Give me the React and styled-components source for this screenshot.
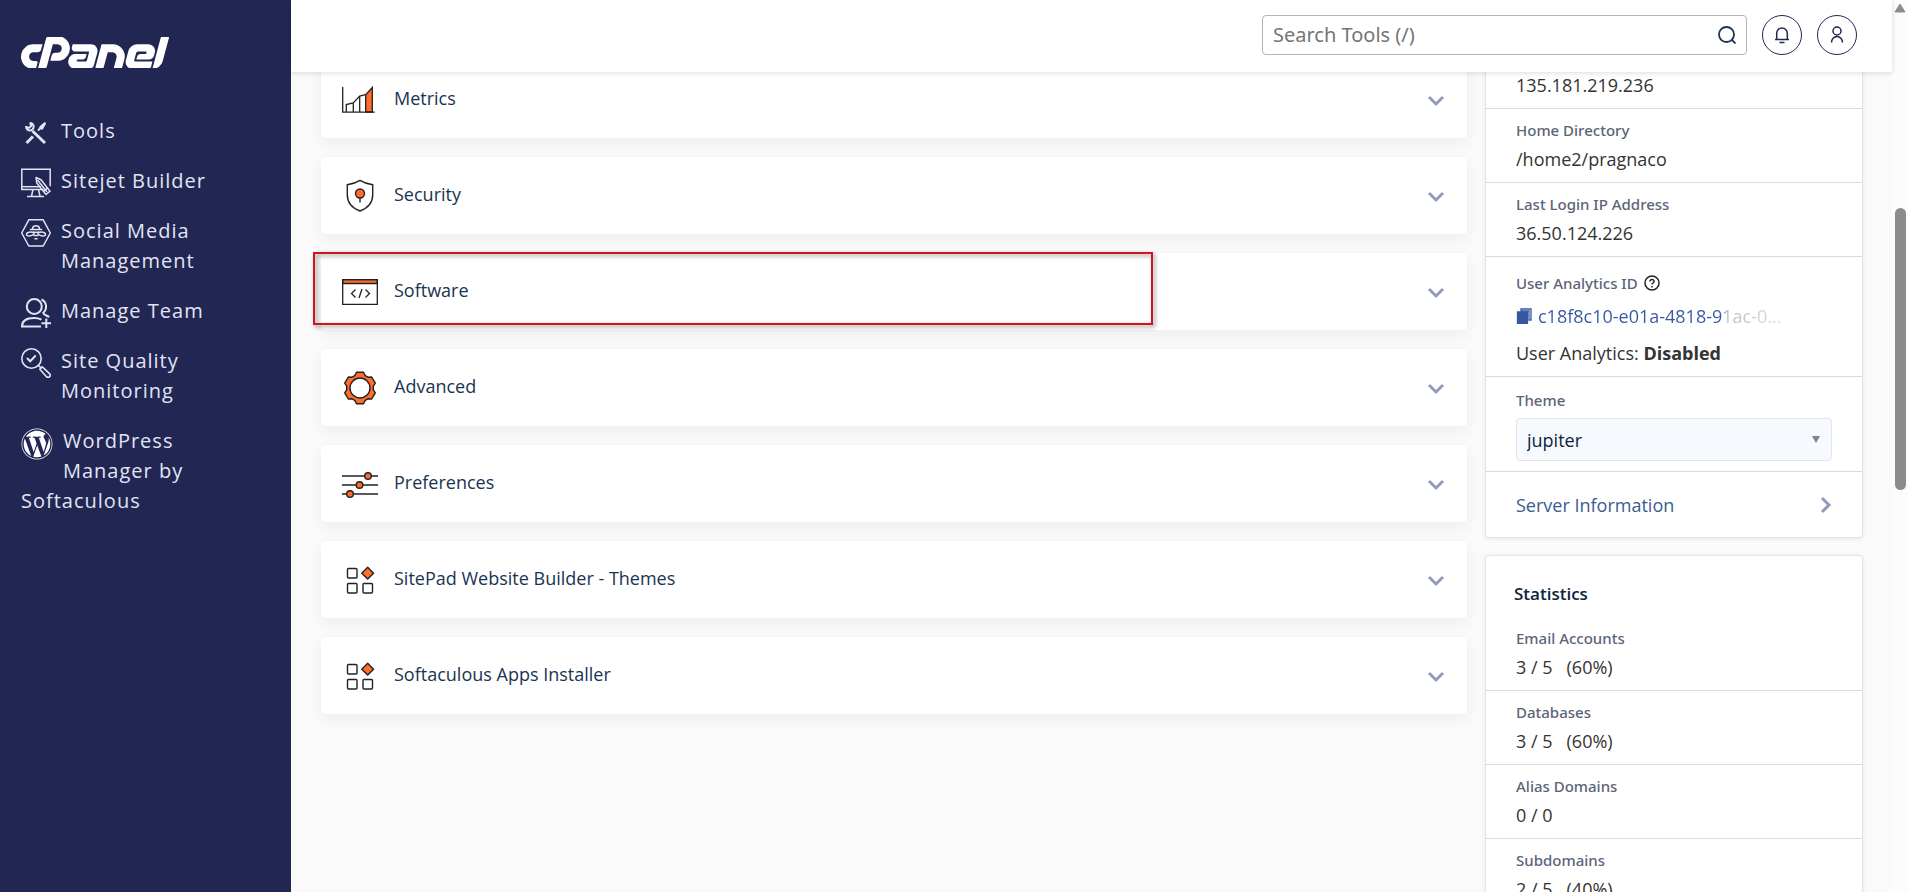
import React from "react";
import styled, { createGlobalStyle } from "styled-components";
import { SiCpanel } from "react-icons/si";
import { FaWordpress } from "react-icons/fa";

const GlobalStyle = createGlobalStyle`
  * { box-sizing: border-box; }
  body {
    margin: 0;
    background: #fafafa;
    color: #333;
    font-family: "Open Sans", "Noto Sans", sans-serif;
    font-size: 18px;
  }
  button, input, select { font: inherit; }
  a { text-decoration: none; }
`;

const Page = styled.div`
  display: flex;
  height: 100vh;
  overflow: hidden;
`;

const Sidebar = styled.nav`
  flex: 0 0 291px;
  background: #212653;
  padding: 37px 30px 0 21px;
`;

const Logo = styled.a`
  display: block;
  height: 31px;
  margin-bottom: 38px;
  color: #fff;
  svg { display: block; width: 148px; height: 31px; }
`;

const NavList = styled.ul`
  list-style: none;
  margin: 0;
  padding: 0;
`;

const NavLink = styled.a`
  display: block;
  padding: 10px 0;
  color: #e2e4f3;
  font-size: 20px;
  line-height: 30px;
  letter-spacing: 1px;
`;

const NavIcon = styled.span`
  float: left;
  height: 32px;
  margin: 2px 10px 0 0;
  svg { display: block; }
`;

const Column = styled.div`
  flex: 1;
  min-width: 0;
  display: flex;
  flex-direction: column;
`;

const Header = styled.header`
  position: relative;
  z-index: 2;
  flex: 0 0 72px;
  display: flex;
  justify-content: flex-end;
  align-items: flex-start;
  gap: 15px;
  padding: 15px 35px 0;
  background: #fff;
  box-shadow: 0 1px 5px rgba(0, 0, 0, 0.14);
`;

const SearchBox = styled.label`
  display: flex;
  align-items: center;
  width: 485px;
  height: 40px;
  padding: 0 10px;
  border: 1px solid #b5b5b5;
  border-radius: 4px;
  background: #fff;
`;

const SearchInput = styled.input`
  flex: 1;
  min-width: 0;
  padding: 0 0 2px;
  border: 0;
  outline: 0;
  background: none;
  font-family: "Noto Sans", "Open Sans", sans-serif;
  font-size: 20px;
  &::placeholder { color: #757575; }
`;

const RoundButton = styled.button`
  display: grid;
  place-items: center;
  width: 40px;
  height: 40px;
  padding: 0;
  border: 1px solid #212653;
  border-radius: 50%;
  background: #fff;
`;

const Content = styled.main`
  flex: 1;
  min-height: 0;
  overflow: hidden;
  display: flex;
  align-items: flex-start;
  gap: 18px;
  padding: 0 29px 0 30px;
`;

const Groups = styled.div`
  flex: 1;
  min-width: 0;
  display: flex;
  flex-direction: column;
  gap: 19px;
  margin-top: -11px;
`;

const GroupCard = styled.section`
  position: relative;
  border-radius: 4px;
  background: #fff;
  box-shadow: 0 4px 14px rgba(0, 0, 0, 0.06);
`;

const GroupButton = styled.button`
  display: flex;
  align-items: center;
  width: 100%;
  height: 77px;
  padding: 0 19px 0 21px;
  border: 0;
  background: none;
  color: #193452;
  text-align: left;
`;

const GroupName = styled.span`
  flex: 1;
  padding: 0 0 4px 16px;
  line-height: 24px;
`;

const Highlight = styled.span`
  position: absolute;
  top: -1px;
  left: -8px;
  width: calc(73% + 3px);
  height: 73px;
  border: 2px solid #d3141b;
  filter: drop-shadow(2px 2px 2px rgba(0, 0, 0, 0.45));
  pointer-events: none;
`;

const Aside = styled.aside`
  flex: 0 0 378px;
  display: flex;
  flex-direction: column;
  gap: 17px;
  margin-top: -16px;
`;

const Panel = styled.section`
  border: 1px solid #e4e4e6;
  border-radius: 4px;
  background: #fff;
  box-shadow: 0 1px 4px rgba(0, 0, 0, 0.08);
`;

const PanelTitle = styled.h2`
  margin: 0;
  padding: 26px 28px 11px;
  color: #0b2440;
  font-size: 17px;
  font-weight: 600;
  line-height: 24px;
`;

const Row = styled.div`
  padding: 10px 30px 9px;
  & + & { border-top: 1px solid #d9dadc; }
`;

const Label = styled.label`
  display: flex;
  align-items: center;
  gap: 6px;
  color: #5b6478;
  font-family: "Noto Sans", "Open Sans", sans-serif;
  font-size: 15px;
  font-weight: 500;
  line-height: 22px;
`;

const Value = styled.div`
  padding-top: 4px;
  line-height: 28px;
  white-space: pre;
`;

const AnalyticsRow = styled(Row)`
  padding-top: 15px;
`;

const AnalyticsId = styled.a`
  display: flex;
  align-items: center;
  gap: 6px;
  margin: 8px 0 5px;
  color: #3558a0;
  line-height: 28px;
`;

const IdText = styled.span`
  background: linear-gradient(90deg, #3558a0 75%, #b9bdca 78%, #dcdfe8 100%);
  background-clip: text;
  color: transparent;
`;

const ThemeRow = styled(Row)`
  padding: 12px 30px 10px;
`;

const ThemeSelect = styled.div`
  position: relative;
  margin-top: 7px;
  svg { position: absolute; right: 12px; top: 18px; pointer-events: none; }
`;

const Select = styled.select`
  display: block;
  appearance: none;
  width: 100%;
  height: 43px;
  padding: 0 10px;
  border: 1px solid #e1e5ec;
  border-radius: 4px;
  background: #f6f9fd;
  color: #0b2440;
`;

const ServerLink = styled.a`
  display: flex;
  align-items: center;
  justify-content: space-between;
  height: 66px;
  padding: 0 30px;
  border-top: 1px solid #d9dadc;
  color: #3a5c93;
`;

const ScrollTrack = styled.div`
  flex: 0 0 16px;
  display: flex;
  flex-direction: column;
  align-items: center;
  background: #fcfcfc;
  svg { flex: none; margin: 3px 0 195px; }
`;

const ScrollThumb = styled.span`
  width: 11px;
  height: 282px;
  border-radius: 6px;
  background: #8b8b8b;
`;

const Icon = ({ size = 30, children, ...rest }) => (
  <svg width={size} height={size} viewBox={`0 0 ${size} ${size}`} fill="none" aria-hidden="true" {...rest}>
    {children}
  </svg>
);

const NAV_COLOR = "#e2e4f3";

const ToolsIcon = () => (
  <Icon stroke={NAV_COLOR}>
    <path d="M11.5 13 24 25" strokeWidth="3" />
    <path d="M5.5 25 12 18.5" strokeWidth="3" />
    <path d="M17 12.5 20 9.5" strokeWidth="2" />
    <path d="M19.500 9.300 23.800 5.500 21 10.500Z" fill={NAV_COLOR} strokeWidth="2.5" strokeLinejoin="round" />
    <path d="M8.8 4.9A3.8 3.8 0 1 1 5.1 8.2M9 4.6l1.2 3.4-2.2 1.9-3.3-1.2" strokeWidth="2" />
  </Icon>
);

const SitejetIcon = () => (
  <Icon stroke={NAV_COLOR} strokeWidth="1.5">
    <path d="M22.5 21.5H.8V1.3h28.4v17" />
    <path d="M.8 18.7h19" />
    <path d="M12 21.5 10.5 28M17.5 21.5 19 28M6 28.5h17" />
    <path d="m15 9.5.8 5.5 9.2 11.5 4-3.3-9-11.4Z" strokeLinejoin="round" />
    <path d="m16.5 12 9.5 12M22.5 23.5l4-3.3" />
  </Icon>
);

const SocialIcon = () => (
  <Icon stroke={NAV_COLOR} strokeWidth="1.5">
    <path d="M7.8 1.8h14.4L29.3 15l-7.1 13H7.8L.7 15Z" strokeLinejoin="round" />
    <path d="M11.500 11c0-4.500 7-4.500 7 0M9.500 11.5h11M13 17.5h4M14 20.700h2" strokeLinecap="round" />
    <path d="M12 14.300h6" />
    <path d="M13 14.500c-3-1-7.500-.5-7.500 1.800 0 2.500 5 2.200 7.500-.3ZM17 14.500c3-1 7.500-.5 7.500 1.800 0 2.500-5 2.200-7.500-.3Z" />
  </Icon>
);

const TeamIcon = () => (
  <Icon stroke={NAV_COLOR} strokeWidth="2">
    <circle cx="13.300" cy="8.500" r="7.500" />
    <path d="M20 28.500H1c0-5.500 4.500-8.500 12-8.500 3.500 0 5.500.5 7.500 1.600" />
    <path d="M20.500 1.500c5.500 2.500 6 9.500 1.800 13.300.3 2.200 3.700 2.700 6 4.200" />
    <path d="M25.300 20.500v9.500M20.500 25.200h9.500" />
  </Icon>
);

const QualityIcon = () => (
  <Icon stroke={NAV_COLOR} strokeWidth="1.600" strokeLinecap="round">
    <circle cx="10.500" cy="10.500" r="9.700" />
    <path d="m6.500 10.500 2.700 2.700 5-5.200" strokeWidth="2" />
    <path d="m17.300 17.300 2.500 2.500" />
    <path d="m18.800 21.300 2.500-2.500 7.200 6.900c2 2-.9 5-3 3Z" strokeLinejoin="round" />
  </Icon>
);

const navItems = [
  ["Tools", <ToolsIcon />],
  ["Sitejet Builder", <SitejetIcon />],
  ["Social Media Management", <SocialIcon />],
  ["Manage Team", <TeamIcon />],
  ["Site Quality Monitoring", <QualityIcon />],
  ["WordPress Manager by Softaculous", <FaWordpress size={32} color="#fff" />],
];

const INK = "#222";
const ORANGE = "#ff6c2c";

const MetricsIcon = () => (
  <Icon size={36} stroke={INK} strokeWidth="1.300">
    <path d="M23.700 30V12.700L30.300 5.500V30Z" fill={ORANGE} />
    <path d="M4.300 30v-7.500l7-1.500 6.400-7 6-1.300M11.300 21v9M17.700 14v16" />
    <path d="M.7 5v25.200h32" />
  </Icon>
);

const SecurityIcon = () => (
  <Icon size={36} stroke={INK} strokeWidth="1.400">
    <path d="M18 2.300c3.500 2.200 8 3.700 12.700 4.400V17c0 7-4.700 13-12.700 16C10 30 5.300 24 5.300 17V6.700C10 6 14.500 4.500 18 2.300Z" />
    <circle cx="18" cy="15.500" r="4.500" fill={ORANGE} />
    <path d="M18 20v4.500" />
  </Icon>
);

const SoftwareIcon = () => (
  <Icon size={36} stroke={INK} strokeWidth="1.300">
    <path d="M.7 5.700h34.600v3.800H.7Z" fill={ORANGE} />
    <path d="M.7 5.700h34.600v24.600H.7Z" />
    <path d="m13.500 15.500-4 4 4 4M23.500 15.500l4 4-4 4M20 15l-3 9" />
  </Icon>
);

const AdvancedIcon = () => (
  <Icon size={36} stroke={INK} strokeWidth="1.400">
    <path
      d="M14.500 2.300h7l1.700 3.300 2.800 1.600 3.700-.2 3.600 6.100-2 3.100v3.600l2 3.100-3.600 6.100-3.700-.2-2.800 1.600-1.700 3.300h-7l-1.700-3.300L10 28.800l-3.700.2-3.600-6.100 2-3.100v-3.600l-2-3.100L6.300 7l3.700.2 2.800-1.600Z"
      fill={ORANGE}
      strokeLinejoin="round"
    />
    <circle cx="18" cy="18" r="10" fill="#fff" />
  </Icon>
);

const PreferencesIcon = () => (
  <Icon size={36} stroke={INK} strokeWidth="1.400">
    <path d="M0 10h36M0 19h36M0 28h36" />
    <circle cx="26" cy="10" r="3.300" fill={ORANGE} />
    <circle cx="17.500" cy="19" r="3.300" fill={ORANGE} />
    <circle cx="8" cy="28" r="3.300" fill={ORANGE} />
  </Icon>
);

const AppsIcon = () => (
  <Icon size={36} stroke={INK} strokeWidth="1.400">
    <rect x="5.500" y="6.500" width="9.500" height="9.500" rx="1" />
    <rect x="5.500" y="21.500" width="9.500" height="9.500" rx="1" />
    <rect x="21" y="21.500" width="9.500" height="9.500" rx="1" />
    <path d="m25.700 5.300 5.900 5.900-5.900 5.900-5.900-5.900Z" fill={ORANGE} strokeLinejoin="round" />
  </Icon>
);

const Chevron = ({ right }) => (
  <Icon size={24} stroke="#959ab8" strokeWidth="3">
    <path d={right ? "m14 5 7 7-7 7" : "m5 9 7 7 7-7"} />
  </Icon>
);

const groups = [
  ["Metrics", <MetricsIcon />],
  ["Security", <SecurityIcon />],
  ["Software", <SoftwareIcon />, true],
  ["Advanced", <AdvancedIcon />],
  ["Preferences", <PreferencesIcon />],
  ["SitePad Website Builder - Themes", <AppsIcon />],
  ["Softaculous Apps Installer", <AppsIcon />],
];

const info = [
  ["", "135.181.219.236"],
  ["Home Directory", "/home2/pragnaco"],
  ["Last Login IP Address", "36.50.124.226"],
];

const stats = [
  ["Email Accounts", "3 / 5   (60%)"],
  ["Databases", "3 / 5   (60%)"],
  ["Alias Domains", "0 / 0"],
  ["Subdomains", "2 / 5   (40%)"],
];

const InfoRow = ({ label, value }) => (
  <Row>
    {label && <Label as="div">{label}</Label>}
    <Value>{value}</Value>
  </Row>
);

export default function App() {
  return (
    <>
      <GlobalStyle />
      <Page>
        <Sidebar>
          <Logo href="#" aria-label="cPanel">
            <SiCpanel viewBox="0 9.500 24 5" />
          </Logo>
          <NavList>
            {navItems.map(([name, icon]) => (
              <li key={name}>
                <NavLink href="#">
                  <NavIcon>{icon}</NavIcon>
                  {name}
                </NavLink>
              </li>
            ))}
          </NavList>
        </Sidebar>
        <Column>
          <Header>
            <SearchBox>
              <SearchInput type="text" placeholder="Search Tools (/)" aria-label="Search Tools" />
              <Icon size={18} stroke="#193452" strokeWidth="1.800">
                <circle cx="8.500" cy="8.500" r="7.500" />
                <path d="m13.500 13.500 4 4" />
              </Icon>
            </SearchBox>
            <RoundButton aria-label="Notifications">
              <Icon size={18} stroke="#212653" strokeWidth="1.500">
                <path d="M2 13.500h14M3.700 13.500V7.200a5.300 5.300 0 0 1 10.600 0v6.300M6.500 16.500h5" />
              </Icon>
            </RoundButton>
            <RoundButton aria-label="Account">
              <Icon size={18} stroke="#212653" strokeWidth="1.500">
                <circle cx="9" cy="5" r="4" />
                <path d="M3.500 16.500a5.500 6 0 0 1 11 0" />
              </Icon>
            </RoundButton>
          </Header>
          <Content>
            <Groups>
              {groups.map(([name, icon, marked]) => (
                <GroupCard key={name}>
                  <GroupButton type="button">
                    {icon}
                    <GroupName>{name}</GroupName>
                    <Chevron />
                  </GroupButton>
                  {marked && <Highlight />}
                </GroupCard>
              ))}
            </Groups>
            <Aside>
              <Panel>
                {info.map(([label, value]) => (
                  <InfoRow key={value} label={label} value={value} />
                ))}
                <AnalyticsRow>
                  <Label as="div">
                    User Analytics ID
                    <Icon size={16} stroke="#222" strokeWidth="1.500">
                      <circle cx="8" cy="8" r="7" />
                      <path d="M5.900 6.500c0-2.800 4.300-2.600 4.200 0 0 1.500-2.100 1.500-2.100 3.100M8 11v1.500" />
                    </Icon>
                  </Label>
                  <AnalyticsId href="#">
                    <Icon size={16} stroke="#3558a0" strokeWidth="1.300">
                      <path d="M5 1h10v11h-2V3H5Z" />
                      <path d="M1.500 4h10v11.300h-10Z" fill="#3558a0" />
                    </Icon>
                    <IdText>c18f8c10-e01a-4818-91ac-0...</IdText>
                  </AnalyticsId>
                  <Value>
                    User Analytics: <b>Disabled</b>
                  </Value>
                </AnalyticsRow>
                <ThemeRow>
                  <Label htmlFor="theme">Theme</Label>
                  <ThemeSelect>
                    <Select id="theme" defaultValue="jupiter">
                      <option>jupiter</option>
                    </Select>
                    <svg width="8" height="8" viewBox="0 0 8 8" aria-hidden="true">
                      <path d="M0 0h8L4 7Z" fill="#808388" />
                    </svg>
                  </ThemeSelect>
                </ThemeRow>
                <ServerLink href="#">
                  Server Information
                  <Chevron right />
                </ServerLink>
              </Panel>
              <Panel>
                <PanelTitle>Statistics</PanelTitle>
                {stats.map(([label, value]) => (
                  <InfoRow key={label} label={label} value={value} />
                ))}
              </Panel>
            </Aside>
          </Content>
        </Column>
        <ScrollTrack>
          <svg width="12" height="10" viewBox="0 0 12 10" aria-hidden="true">
            <path d="M6 1 11 9H1Z" fill="#8b8b8b" stroke="#8b8b8b" strokeLinejoin="round" />
          </svg>
          <ScrollThumb />
        </ScrollTrack>
      </Page>
    </>
  );
}
